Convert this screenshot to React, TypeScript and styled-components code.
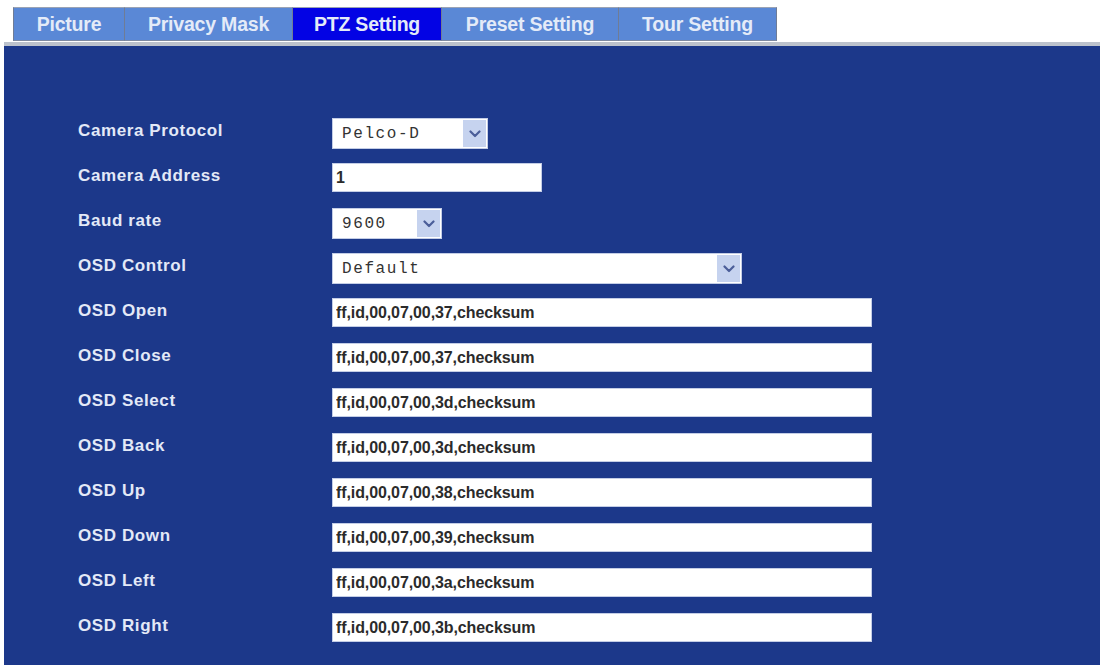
import { createGlobalStyle, styled } from "styled-components";

const GlobalStyle = createGlobalStyle`
  html, body {
    margin: 0;
    padding: 0;
    background: #ffffff;
    overflow: hidden;
  }
  body {
    font-family: "Liberation Sans", Arial, sans-serif;
  }
`;

const Page = styled.div`
  width: 1100px;
  height: 665px;
  display: flex;
  flex-direction: column;
`;

const TabBar = styled.div`
  display: flex;
  margin: 7px 0 0 13px;
  height: 35px;
`;

const Tab = styled.div<{ $width: number; $active?: boolean }>`
  width: ${(p) => p.$width}px;
  height: 34px;
  box-sizing: border-box;
  display: flex;
  align-items: center;
  justify-content: center;
  background: ${(p) => (p.$active ? "#0303e4" : "#5a88d6")};
  color: #e4ebf8;
  font-size: 19.5px;
  font-weight: 700;
  letter-spacing: -0.2px;
  border-top: 1px solid #9aa3b4;
  border-left: 1px solid #6f7c96;
  border-bottom: 1px solid #7d8aa2;

  &:last-child {
    border-right: 1px solid #6f7c96;
  }
`;

const Panel = styled.div`
  flex: 1;
  margin-left: 4px;
  background: #1c388a;
  border-top: 4px solid #bcc2cc;
  padding: 72px 0 0 74px;
  display: flex;
  flex-direction: column;
`;

const Row = styled.div`
  display: grid;
  grid-template-columns: 254px auto;
  height: 45px;
  align-items: start;
`;

const Label = styled.div`
  color: #e3e9f7;
  font-size: 17px;
  font-weight: 700;
  letter-spacing: 0.6px;
  line-height: 22px;
  padding-top: 2px;
`;

const SelectBox = styled.div<{ $width: number }>`
  width: ${(p) => p.$width}px;
  height: 31px;
  box-sizing: border-box;
  background: #ffffff;
  border: 1px solid #c3cde6;
  display: flex;
  align-items: stretch;
  padding: 1px;
`;

const SelectText = styled.span`
  flex: 1;
  display: flex;
  align-items: center;
  padding-left: 8px;
  font-family: "Liberation Mono", "Courier New", monospace;
  font-size: 16px;
  letter-spacing: 1.6px;
  color: #333333;
`;

const Arrow = styled.span`
  width: 23px;
  background: #c6d3ef;
  display: flex;
  align-items: center;
  justify-content: center;
`;

const TextInput = styled.input<{ $width: number }>`
  width: ${(p) => p.$width}px;
  height: 29px;
  box-sizing: border-box;
  margin: 0;
  padding: 0 3px;
  border: 1px solid #c3cde6;
  background: #ffffff;
  font-family: "Liberation Sans", Arial, sans-serif;
  font-size: 16px;
  font-weight: 700;
  letter-spacing: -0.1px;
  color: #2b2b2b;
  outline: none;
`;

const Chevron = () => (
  <svg width="12" height="8" viewBox="0 0 12 8">
    <polyline
      points="1.5,1.5 6,6 10.5,1.5"
      fill="none"
      stroke="#4b5e99"
      strokeWidth="2.2"
      strokeLinecap="round"
      strokeLinejoin="round"
    />
  </svg>
);

const tabs = [
  { name: "Picture", width: 111 },
  { name: "Privacy Mask", width: 168 },
  { name: "PTZ Setting", width: 149 },
  { name: "Preset Setting", width: 177 },
  { name: "Tour Setting", width: 159 },
];

const osdCommands = [
  { label: "OSD Open", value: "ff,id,00,07,00,37,checksum" },
  { label: "OSD Close", value: "ff,id,00,07,00,37,checksum" },
  { label: "OSD Select", value: "ff,id,00,07,00,3d,checksum" },
  { label: "OSD Back", value: "ff,id,00,07,00,3d,checksum" },
  { label: "OSD Up", value: "ff,id,00,07,00,38,checksum" },
  { label: "OSD Down", value: "ff,id,00,07,00,39,checksum" },
  { label: "OSD Left", value: "ff,id,00,07,00,3a,checksum" },
  { label: "OSD Right", value: "ff,id,00,07,00,3b,checksum" },
];

const Select = ({ value, width }: { value: string; width: number }) => (
  <SelectBox $width={width}>
    <SelectText>{value}</SelectText>
    <Arrow>
      <Chevron />
    </Arrow>
  </SelectBox>
);

const App = () => {
  return (
    <>
      <GlobalStyle />
      <Page>
        <TabBar>
          {tabs.map((t) => (
            <Tab key={t.name} $width={t.width} $active={t.name === "PTZ Setting"}>
              {t.name}
            </Tab>
          ))}
        </TabBar>
        <Panel>
          <Row>
            <Label>Camera Protocol</Label>
            <Select value="Pelco-D" width={156} />
          </Row>
          <Row>
            <Label>Camera Address</Label>
            <TextInput $width={210} defaultValue="1" readOnly />
          </Row>
          <Row>
            <Label>Baud rate</Label>
            <Select value="9600" width={110} />
          </Row>
          <Row>
            <Label>OSD Control</Label>
            <Select value="Default" width={410} />
          </Row>
          {osdCommands.map((c) => (
            <Row key={c.label}>
              <Label>{c.label}</Label>
              <TextInput $width={540} defaultValue={c.value} readOnly />
            </Row>
          ))}
        </Panel>
      </Page>
    </>
  );
};

export default App;
